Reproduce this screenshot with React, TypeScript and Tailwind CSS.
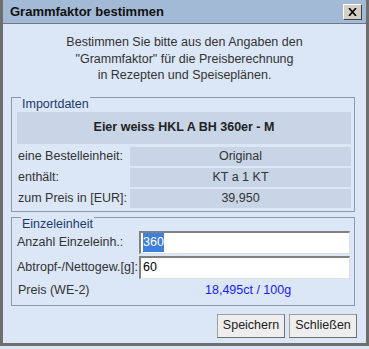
const FONT = "font-['Liberation_Sans',Arial,sans-serif]";

function InfoRow({ label, value }: { label: string; value: string }) {
  return (
    <div className="flex h-[19px] items-center">
      <div className="w-[113px] whitespace-nowrap pl-[1px] text-[12.5px] text-[#333]">{label}</div>
      <div className="flex h-full flex-1 items-center justify-center bg-[#c8d5e6] text-[12.5px] text-[#333]">
        {value}
      </div>
    </div>
  );
}

function InputRow({ label, value, selected }: { label: string; value: string; selected?: boolean }) {
  return (
    <div className="flex h-[23px] items-center">
      <div className="w-[127px] whitespace-nowrap pl-[5px] text-[12.5px] text-[#333]">{label}</div>
      <div className="flex h-full flex-1 items-center border border-t-2 border-l-2 border-[#808080] border-b-[#e0e0e0] border-r-[#e0e0e0] bg-white pl-[2px] text-[12.5px]">
        {selected ? <span className="bg-[#3d7fdd] text-white">{value}</span> : <span className="text-black">{value}</span>}
      </div>
    </div>
  );
}

function Button({ children }: { children: React.ReactNode }) {
  return (
    <button className="h-[24px] w-[68px] border border-[#a0a0a0] border-b-[#707070] border-r-[#707070] bg-[#eeeeee] text-[12.5px] text-[#222]">
      {children}
    </button>
  );
}

export default function App() {
  return (
    <div className={`${FONT} h-[349px] w-[369px] bg-[#dbe6f6]`}>
      <div className="flex h-[346px] flex-col border-x-[3px] border-b-[3px] border-[#6e6e6e] bg-[#dbe6f6]">
        <div className="flex h-[24px] shrink-0 items-center justify-between border-b border-[#6a7a8c] bg-[#a3bad7] pl-[7px] pr-[4px]">
          <span className="text-[13px] font-bold text-[#111]">Grammfaktor bestimmen</span>
          <div className="flex h-[16px] w-[19px] items-center justify-center border border-[#fff] border-b-[#404040] border-r-[#404040] bg-[#d4d0c8]">
            <svg width="9" height="8" viewBox="0 0 9 8">
              <path d="M1 0 L8 8 M8 0 L1 8" stroke="#000" strokeWidth="1.6" />
            </svg>
          </div>
        </div>

        <div className="mt-[10px] text-center text-[12.5px] leading-[16.5px] text-[#333]">
          <p>Bestimmen Sie bitte aus den Angaben den</p>
          <p>"Grammfaktor" für die Preisberechnung</p>
          <p>in Rezepten und Speiseplänen.</p>
        </div>

        <div className="ml-[8px] mr-[11px] mt-[13px] h-[115px] border border-[#8c9aaa] pb-[3px] pl-[5px] pr-[3px]">
          <div className="-mt-[1px] ml-[4px] h-[15px] w-fit bg-[#dbe6f6] px-[1px] text-[12.5px] leading-[15px] text-[#1c3a6e]">
            Importdaten
          </div>
          <div className="flex h-[32px] items-center justify-center bg-[#c8d5e6] text-[12.5px] font-bold text-[#222]">
            Eier weiss HKL A BH 360er - M
          </div>
          <div className="mt-[3px] flex flex-col gap-[2px]">
            <InfoRow label="eine Bestelleinheit:" value="Original" />
            <InfoRow label="enthält:" value="KT a 1 KT" />
            <InfoRow label="zum Preis in [EUR]:" value="39,950" />
          </div>
        </div>

        <div className="ml-[8px] mr-[11px] mt-[5px] h-[89px] border border-[#8c9aaa] pr-[4px]">
          <div className="-mt-[1px] ml-[9px] h-[14px] w-fit bg-[#dbe6f6] px-[1px] text-[12.5px] leading-[15px] text-[#1c3a6e]">
            Einzeleinheit
          </div>
          <div className="flex flex-col gap-[2px]">
            <InputRow label="Anzahl Einzeleinh.:" value="360" selected />
            <InputRow label="Abtropf-/Nettogew.[g]:" value="60" />
          </div>
          <div className="mt-[1px] flex h-[22px] items-center text-[12.5px]">
            <span className="w-[193px] pl-[6px] text-[#333]">Preis (WE-2)</span>
            <span className="text-[#1a1aff]">18,495ct / 100g</span>
          </div>
        </div>

        <div className="mt-[8px] flex justify-end gap-[4px] pr-[9px]">
          <Button>Speichern</Button>
          <Button>Schließen</Button>
        </div>
      </div>
    </div>
  );
}
